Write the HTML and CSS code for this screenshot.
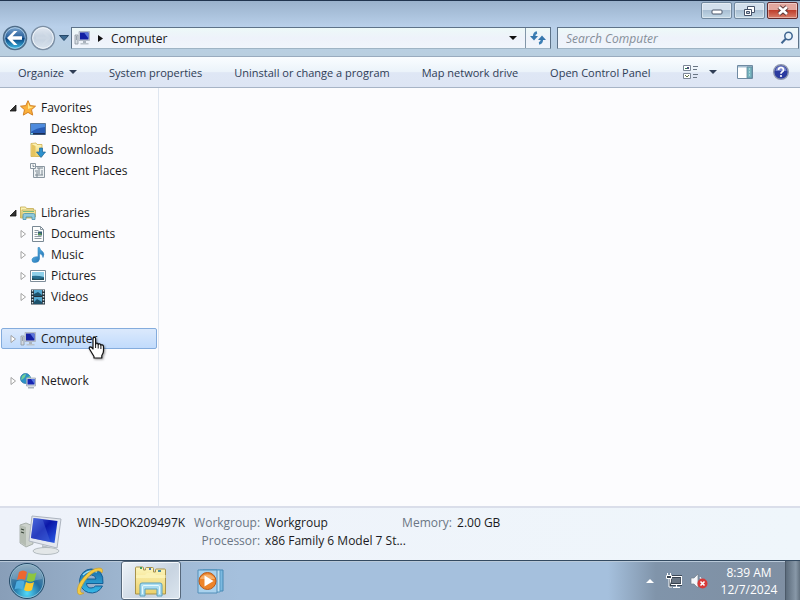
FILE: index.html
```html
<!DOCTYPE html>
<html lang="en">
<head>
    <meta charset="UTF-8">
    <meta name="viewport" content="width=device-width, initial-scale=1.0">
    <title>Computer</title>
    <link rel="stylesheet" href="styles.css">
</head>
<body>
    <!-- Shared icons -->
    <svg class="sprite" aria-hidden="true">
        <defs>
            <linearGradient id="screenBlue" x1="0" y1="0" x2="1" y2="1">
                <stop offset="0" stop-color="#4d6ae0"/>
                <stop offset=".45" stop-color="#0a16a8"/>
                <stop offset="1" stop-color="#2f62e8"/>
            </linearGradient>
            <linearGradient id="folderYellow" x1="0" y1="0" x2="0" y2="1">
                <stop offset="0" stop-color="#fdf6bd"/>
                <stop offset="1" stop-color="#ecd06a"/>
            </linearGradient>
            <linearGradient id="musicBlue" x1="0" y1="0" x2="1" y2="1">
                <stop offset="0" stop-color="#6fc8ee"/>
                <stop offset="1" stop-color="#1263ae"/>
            </linearGradient>
        </defs>
        <symbol id="icon-pc" viewBox="0 0 16 16">
            <path d="M1 5h3v9H1z" fill="#d4dbe2" stroke="#8b959f" stroke-width=".8"/>
            <path d="M2 7h1M2 9h1" stroke="#5d6c7a"/>
            <path d="M5 1.500h10.500v9H5z" fill="#c7ced8" stroke="#a8b1bd" stroke-width=".8"/>
            <path d="M6 2.500h8.500v7H6z" fill="#1420a4"/>
            <path d="M10 2.500h4.500v6z" fill="#5a75dc"/>
            <path d="M9 11h3v2H9z" fill="#aab3bd"/>
            <path d="M6.500 13h8v1.500h-8z" fill="#bac3cb"/>
        </symbol>
        <symbol id="arrow-open" viewBox="0 0 8 8">
            <path d="M7 1v6H1z" fill="#333" stroke="#111" stroke-width=".8"/>
        </symbol>
        <symbol id="arrow-closed" viewBox="0 0 8 8">
            <path d="M2 .5v7L6.500 4z" fill="#fff" stroke="#9a9a9a" stroke-width=".9"/>
        </symbol>
        <symbol id="arrow-down" viewBox="0 0 8 4">
            <path d="M0 0h8L4 4z" fill="currentColor"/>
        </symbol>
    </svg>

    <div class="window">
        <header class="titlebar">
            <button class="win-btn" aria-label="Minimize">
                <svg width="14" height="10" viewBox="0 0 14 10"><rect x="2" y="4" width="10" height="4" rx="1" fill="#fff" stroke="#4a566b"/></svg>
            </button>
            <button class="win-btn" aria-label="Restore">
                <svg width="14" height="12" viewBox="0 0 14 12"><path d="M4.500 1.500h7v6h-7z" fill="#fff" stroke="#46536a"/><path d="M1.500 4.500h7v6h-7z" fill="#fff" stroke="#46536a"/><path d="M3.500 6.500h3v2h-3z" fill="#b7c7d8" stroke="#46536a"/></svg>
            </button>
            <button class="win-btn win-close" aria-label="Close">
                <svg width="14" height="11" viewBox="0 0 14 11"><path d="M3 2l8 7M11 2L3 9" stroke="#5d3a3a" stroke-width="4.500"/><path d="M3 2l8 7M11 2L3 9" stroke="#fff" stroke-width="2.600"/></svg>
            </button>
        </header>

        <div class="navbar">
            <div class="travel">
                <button class="travel-btn" aria-label="Back">
                    <svg width="26" height="26" viewBox="0 0 26 26">
                        <defs><linearGradient id="backFill" x1="0" y1="0" x2="0" y2="1"><stop offset="0" stop-color="#7fa9d2"/><stop offset=".48" stop-color="#285f9b"/><stop offset=".52" stop-color="#07427f"/><stop offset="1" stop-color="#42c4ee"/></linearGradient></defs>
                        <circle cx="13" cy="13" r="11.500" fill="url(#backFill)" stroke="#4f6c88" stroke-width="1.500"/>
                        <circle cx="13" cy="13" r="10.300" fill="none" stroke="#c5e0f3" stroke-opacity=".7"/>
                        <path d="M5 13l7-7h3.500l-5 5.200H20v3.600h-9.500l5 5.200H12z" fill="#fff"/>
                    </svg>
                </button>
                <button class="travel-btn" aria-label="Forward">
                    <svg width="26" height="26" viewBox="0 0 26 26">
                        <defs><linearGradient id="fwdFill" x1="0" y1="0" x2="0" y2="1"><stop offset="0" stop-color="#e4eaf2"/><stop offset=".5" stop-color="#c3d0df"/><stop offset="1" stop-color="#dbe5ef"/></linearGradient></defs>
                        <circle cx="13" cy="13" r="11.500" fill="url(#fwdFill)" stroke="#7c8fa4" stroke-width="1.500"/>
                        <circle cx="13" cy="13" r="10.300" fill="none" stroke="#f0f5fa"/>
                        <path d="M21 13l-7-7h-3l5 5.500H6v3h10L11 20h3z" fill="#d3dde8" opacity=".5"/>
                    </svg>
                </button>
                <button class="recent-btn" aria-label="Recent pages">
                    <svg width="10" height="6" viewBox="0 0 10 6"><path d="M.5.500h9L5 5.500z" fill="#3d6a92" stroke="#27496a"/></svg>
                </button>
            </div>
            <div class="address">
                <svg width="16" height="16"><use href="#icon-pc"/></svg>
                <svg width="5" height="7" viewBox="0 0 5 7"><path d="M0 0l5 3.500L0 7z" fill="#111"/></svg>
                <a class="crumb" href="#">Computer</a>
                <button class="address-drop" aria-label="Previous locations">
                    <svg width="8" height="4"><use href="#arrow-down"/></svg>
                </button>
                <button class="refresh" aria-label="Refresh">
                    <svg width="16" height="16" viewBox="0 0 16 16"><path d="M7 2.500Q4 3 4 7" fill="none" stroke="#3d7fb5" stroke-width="2.400"/><path d="M0 6h8L4 10.500z" fill="#3576ad"/><path d="M9 13.500q3-.5 3-4.500" fill="none" stroke="#3d7fb5" stroke-width="2.400"/><path d="M8 10h8L12 5.500z" fill="#3576ad"/></svg>
                </button>
            </div>
            <div class="search">
                <input type="text" placeholder="Search Computer" aria-label="Search Computer">
                <svg width="14" height="14" viewBox="0 0 14 14"><circle cx="8.500" cy="5" r="3.700" fill="#eaf4fb" stroke="#3f6590" stroke-width="1.500"/><path d="M5.800 7.800L1.500 12.300" stroke="#3f6590" stroke-width="2"/></svg>
            </div>
        </div>

        <div class="toolbar">
            <button class="tool">Organize <svg width="8" height="4"><use href="#arrow-down"/></svg></button>
            <button class="tool">System properties</button>
            <button class="tool">Uninstall or change a program</button>
            <button class="tool">Map network drive</button>
            <button class="tool">Open Control Panel</button>
            <div class="tool-icons">
                <button class="tool view-btn" aria-label="Change your view">
                    <svg width="16" height="16" viewBox="0 0 16 16"><path d="M.5 1.500h7v5h-7zM.5 9.500h7v5h-7z" fill="#fff" stroke="#7b8796"/><path d="M2 4h2v1H2z" fill="#2c7a4a"/><path d="M4 3h2v2H4z" fill="#444d78"/><path d="M2 11l2 2 2-2" fill="none" stroke="#5c7040"/><path d="M10 2.500h5M10 5.500h4M10 10.500h5M10 13.500h4" stroke="#6a7684"/></svg>
                    <svg width="8" height="4"><use href="#arrow-down"/></svg>
                </button>
                <button class="tool" aria-label="Show the preview pane">
                    <svg width="16" height="14" viewBox="0 0 16 14"><path d="M.5.500h15v13H.5z" fill="#fff" stroke="#6f8aa2"/><path d="M1 1h14v1.500H1z" fill="#a7c0d2"/><path d="M10 2h5v11h-5z" fill="#77b5bf" stroke="#5f899c" stroke-width=".8"/><path d="M12 4h1M12 7h1M12 10h1" stroke="#d8f3f3"/></svg>
                </button>
                <button class="tool" aria-label="Get help">
                    <svg width="16" height="16" viewBox="0 0 16 16"><circle cx="8" cy="8" r="7.300" fill="#2b3ba0" stroke="#8d96ae" stroke-width="1.400"/><path d="M2.500 7a5.500 5 0 0 1 11 0z" fill="#7785cd"/><path d="M5.500 6q0-2.500 2.500-2.500T10.500 6Q10.500 7.300 9 8.100 8 8.700 8 9.800" fill="none" stroke="#fff" stroke-width="1.700"/><circle cx="8" cy="12" r="1.100" fill="#fff"/></svg>
                </button>
            </div>
        </div>

        <div class="content">
            <nav class="sidebar">
                <ul class="tree">
                    <li class="node">
                        <button class="twisty" aria-label="Collapse Favorites"><svg width="8" height="8"><use href="#arrow-open"/></svg></button>
                        <a href="#"><svg width="16" height="16" viewBox="0 0 16 16"><path d="M8 .7l2.200 4.900 5.300.6-4 3.500 1.200 5.400L8 12.400l-4.700 2.700 1.200-5.400-4-3.500 5.300-.6z" fill="#fbb03b" stroke="#d38226"/><path d="M8 2.500l1.600 3.900 4 .5L8 9z" fill="#ffe98a"/></svg>Favorites</a>
                    </li>
                    <li class="node child">
                        <a href="#"><svg width="16" height="16" viewBox="0 0 16 16"><path d="M.5 2.500h15v11H.5z" fill="#285cb5" stroke="#5a7898"/><path d="M1 3h14v3Q6 7 1 11z" fill="#4e8bdd"/><path d="M1 12h14v1.500H1z" fill="#1b2f58"/><path d="M1 12h2v1.500H1z" fill="#7ed1e8"/></svg>Desktop</a>
                    </li>
                    <li class="node child">
                        <a href="#"><svg width="16" height="16" viewBox="0 0 16 16"><path d="M1 1.500l5-.5 1 1.500h5v12H1z" fill="url(#folderYellow)" stroke="#d1ae4e" stroke-width=".8"/><path d="M1.500 2l4 2v11l-4-1z" fill="#e6c45f"/><path d="M9.500 6h3v4h3L11 15.500 6.500 10h3z" fill="#2e91cd" stroke="#1d6699" stroke-width=".7"/></svg>Downloads</a>
                    </li>
                    <li class="node child">
                        <a href="#"><svg width="16" height="16" viewBox="0 0 16 16"><path d="M3.500 3.500h11v11h-11z" fill="#edf1f3" stroke="#8a96a0"/><path d="M.5.500h5v5h-5z" fill="#f8fafb" stroke="#8a96a0"/><path d="M3 1.500v2h1.500M7 5h6M9 5v6M12 7v5M5 8h3M5 12h8M7 9v5" fill="none" stroke="#7b8791"/></svg>Recent Places</a>
                    </li>
                </ul>

                <ul class="tree">
                    <li class="node">
                        <button class="twisty" aria-label="Collapse Libraries"><svg width="8" height="8"><use href="#arrow-open"/></svg></button>
                        <a href="#"><svg width="16" height="16" viewBox="0 0 16 16"><path d="M.5 2h5l1 1.500h7V13H.5z" fill="url(#folderYellow)" stroke="#c3a84b" stroke-width=".8"/><path d="M2 5h13.500v7H2z" fill="#f5e294" stroke="#b8a75b" stroke-width=".7"/><path d="M3 14.500V10q0-1.500 1.500-1.500h9Q15 8.500 15 10v4.500h-3V12H6v2.500z" fill="#8fc9dc" stroke="#4b92ac" stroke-width=".8"/><path d="M3 6.500h11" stroke="#7cb87a"/></svg>Libraries</a>
                    </li>
                    <li class="node child">
                        <button class="twisty" aria-label="Expand Documents"><svg width="8" height="8"><use href="#arrow-closed"/></svg></button>
                        <a href="#"><svg width="16" height="16" viewBox="0 0 16 16"><path d="M2.500.500h8l3 3v12h-11z" fill="#fcfdfd" stroke="#798894"/><path d="M10.500.500v3h3M4.500 4.500h4M4.500 6.500h3M4.500 8.500h3M4.500 10.500h7M4.500 12.500h7" fill="none" stroke="#8e9aa3"/><path d="M8 5.500h4v4H8z" fill="#355c74"/><path d="M8 8l2-1 2 2H8z" fill="#5b9c4b"/></svg>Documents</a>
                    </li>
                    <li class="node child">
                        <button class="twisty" aria-label="Expand Music"><svg width="8" height="8"><use href="#arrow-closed"/></svg></button>
                        <a href="#"><svg width="16" height="16" viewBox="0 0 16 16"><path d="M8 .5h1.500q.5 2.500 3 4 2.500 2 .5 6 0-3-3.500-4V12q-.5 3.500-4.500 3.500-3.500 0-3-3 .8-3 6-2.700z" fill="url(#musicBlue)" stroke="#3283bd" stroke-width=".6"/></svg>Music</a>
                    </li>
                    <li class="node child">
                        <button class="twisty" aria-label="Expand Pictures"><svg width="8" height="8"><use href="#arrow-closed"/></svg></button>
                        <a href="#"><svg width="16" height="16" viewBox="0 0 16 16"><path d="M.5 2.500h15v11H.5z" fill="#fff" stroke="#7e8d9a"/><path d="M2 4h12v8H2z" fill="#8fd0ea"/><path d="M2 8q5-1 12 1v3H2z" fill="#276f91"/><path d="M2 10q5 2 12 0v2H2z" fill="#214e5d"/></svg>Pictures</a>
                    </li>
                    <li class="node child">
                        <button class="twisty" aria-label="Expand Videos"><svg width="8" height="8"><use href="#arrow-closed"/></svg></button>
                        <a href="#"><svg width="16" height="16" viewBox="0 0 16 16"><path d="M1 .5h14v15H1z" fill="#24323c"/><path d="M4 1h8v6H4zM4 8h8v7H4z" fill="#55a9d2"/><path d="M4 5l4-2 4 3v1H4zM4 13l3-3 5 3v2H4z" fill="#1d526c"/><path d="M2.500 1v14M13.500 1v14" stroke="#d7e4ea" stroke-width="1.500" stroke-dasharray="1.500 1.500"/></svg>Videos</a>
                    </li>
                </ul>

                <ul class="tree">
                    <li class="node selected">
                        <button class="twisty" aria-label="Expand Computer"><svg width="8" height="8"><use href="#arrow-closed"/></svg></button>
                        <a href="#"><svg width="16" height="16"><use href="#icon-pc"/></svg>Computer</a>
                        <!-- Hand pointer -->
                        <svg class="pointer" width="20" height="24" viewBox="0 0 20 24"><path d="M6 20.500L1.500 13q-.8-2 .8-2.200 1.200 0 2.700 2.200V3q0-1.700 1.300-1.700T7.600 3v5.500q0-1.300 1.300-1.300t1.300 1.500q.2-1 1.400-.8 1.300.2 1.300 1.500.2-.8 1.400-.5 1.200.3 1.200 1.800V15q0 2-1.700 4.500V22H6z" fill="#fff" stroke="#111" stroke-width="1.200" stroke-linejoin="round"/><path d="M7.600 8v4M10.200 8.500v4M12.900 9.500v3.500" stroke="#111"/></svg>
                    </li>
                </ul>

                <ul class="tree">
                    <li class="node">
                        <button class="twisty" aria-label="Expand Network"><svg width="8" height="8"><use href="#arrow-closed"/></svg></button>
                        <a href="#"><svg width="16" height="16" viewBox="0 0 16 16"><circle cx="5.500" cy="5.500" r="5" fill="#2d92c7" stroke="#22709f" stroke-width=".7"/><path d="M2 3q2-2 4-2l-1 3-2 2-2 1zM6 5l4-2v3L7 9z" fill="#70ce96"/><path d="M6.500 5h9v8h-9z" fill="#d3dbe5" stroke="#929dac" stroke-width=".7"/><path d="M7.500 6h7v5.500h-7z" fill="#1625b2"/><path d="M11 6h3.500v5z" fill="#5577e3"/><path d="M8 14h6v1.500H8z" fill="#a9b4bd"/></svg>Network</a>
                    </li>
                </ul>
            </nav>
            <main class="files"></main>
        </div>

        <footer class="details">
            <svg width="46" height="42" viewBox="0 0 46 42">
                <path d="M2 11l6-2 7 3v18l-7 3-6-4z" fill="#cdd3cd" stroke="#9ca49e" stroke-width=".8"/>
                <path d="M2 11l6 2v19l-6-4z" fill="#b5bdb3"/>
                <path d="M3 15l3 1M3 18l3 1" stroke="#384538" stroke-width="1.300"/>
                <path d="M14 2l29 3-4 29-28-7z" fill="#e4e8ef" stroke="#adb4bf"/>
                <path d="M15.500 4l24 3-3 22-23.500-5z" fill="url(#screenBlue)"/>
                <path d="M15.500 4l9 1 8 23-19.500-4z" fill="#4663d5" opacity=".5"/>
                <path d="M24 31l8 2-1 4h-7z" fill="#b9c0c6"/>
                <ellipse cx="28" cy="37" rx="13" ry="3.500" fill="#e3e7e8" stroke="#a7b0b5" stroke-width=".8"/>
            </svg>
            <strong class="pc-name">WIN-5DOK209497K</strong>
            <dl class="facts">
                <dt>Workgroup:</dt><dd>Workgroup</dd>
                <dt>Memory:</dt><dd>2.00 GB</dd>
                <dt>Processor:</dt><dd class="wide">x86 Family 6 Model 7 St...</dd>
            </dl>
        </footer>
    </div>

    <div class="taskbar">
        <button class="start" aria-label="Start">
            <svg width="38" height="38" viewBox="0 0 38 38">
                <defs><radialGradient id="orb" cx=".5" cy=".85" r=".8"><stop offset="0" stop-color="#51dafa"/><stop offset=".5" stop-color="#226da0"/><stop offset="1" stop-color="#6f94ad"/></radialGradient></defs>
                <circle cx="19" cy="19" r="17.500" fill="url(#orb)" stroke="#254b68"/>
                <circle cx="19" cy="19" r="16.500" fill="none" stroke="#a4cadd" stroke-opacity=".7"/>
                <path d="M4 17a15 14 0 0 1 30 0q-15 4-30 0z" fill="#fff" opacity=".22"/>
                <path d="M11 10q4-3 8 0l-2 8q-4-2-8 0z" fill="#ed6730"/>
                <path d="M20.500 10.500q4 2.500 8 0l-2 8q-4 2.500-8 0z" fill="#8dc63f"/>
                <path d="M8.500 19.500q4-2 8 0l-2 8q-4-2-8 0z" fill="#4dacdf"/>
                <path d="M18 20q4 2.500 8 0l-2 8q-4 2.500-8 0z" fill="#fcc92d"/>
            </svg>
        </button>
        <button class="task" aria-label="Internet Explorer">
            <svg width="32" height="32" viewBox="0 0 32 32">
                <defs><linearGradient id="ieBlue" x1="0" y1="0" x2="0" y2="1"><stop offset="0" stop-color="#1c6da8"/><stop offset="1" stop-color="#35b9e8"/></linearGradient></defs>
                <path d="M16 4a12 12 0 1 0 11.500 17h-7q-1.500 2-4.500 2-4 0-4.500-4.500H28Q29 4 16 4zm-4.500 10q1-4 5-4 4 0 4.500 4z" fill="url(#ieBlue)" fill-rule="evenodd" stroke="#145f96"/>
                <path d="M8 10q6-6 14-3" fill="none" stroke="#9be0f6" stroke-width="1.500"/>
                <path d="M27 8q2-5-3-5Q17 3 9 12 1 21 2.500 27.500q1 4 6.500.5-5 .5-3-5Q9 15 17 8.500q7-5 10-.5z" fill="#f5ca43" stroke="#c69a23" stroke-width=".6"/>
            </svg>
        </button>
        <button class="task active" aria-label="Windows Explorer">
            <svg width="34" height="32" viewBox="0 0 34 32">
                <path d="M1.500 29V3q0-1 1-1h6q1 0 1 1v2h2V3.500q0-1 1-1h6q1 0 1 1V7h2V5q0-1 1-1h8q1 0 1 1v24z" fill="url(#folderYellow)" stroke="#a8924a"/>
                <path d="M2 10h9l2-2h7l2 2h9.500v3H2z" fill="#fbf2b5"/>
                <path d="M6 2h2v2H6z" fill="#3f9c61"/>
                <path d="M15 3h2v2h-2z" fill="#4a76b8"/>
                <path d="M24 5h3v2h-3z" fill="#4a8c9c"/>
                <path d="M6 31V20q0-2 2-2h18q2 0 2 2v11h-5v-7H11v7z" fill="#a9dcf0" stroke="#5a9fbd"/>
                <path d="M8.500 29v-7q0-1.500 1.500-1.500h14q1.500 0 1.500 1.500v7" fill="none" stroke="#e6f8fd"/>
            </svg>
        </button>
        <button class="task" aria-label="Windows Media Player">
            <svg width="28" height="28" viewBox="0 0 28 28">
                <path d="M6 3h20v21H6z" fill="#7bb9e0" stroke="#4688b4"/>
                <path d="M3 3h20v22H3z" fill="#c6e3f4" stroke="#579ac4"/>
                <path d="M1 3h19v23H1z" fill="#a9d2ee" stroke="#538fb9"/>
                <circle cx="10.500" cy="14" r="8.500" fill="#ed842a" stroke="#b95a1b"/>
                <path d="M3 12a8 7 0 0 1 15 0z" fill="#f5ae6a"/>
                <path d="M7.500 8.500v11l9-5.500z" fill="#fff"/>
            </svg>
        </button>
        <div class="tray">
            <button class="tray-btn more" aria-label="Show hidden icons"><svg width="8" height="4" viewBox="0 0 8 4"><path d="M0 4h8L4 0z" fill="#fff"/></svg></button>
            <button class="tray-btn" aria-label="Network"><svg width="16" height="16" viewBox="0 0 16 16"><path d="M4.500 3.500h11v8h-11z" fill="#697583" stroke="#26313e" stroke-width="2.500"/><path d="M4.500 3.500h11v8h-11zM7 14.500h7M10.500 12v2" fill="none" stroke="#fff" stroke-width="1.200"/><path d="M.5 2.500h5v3h-5zM1.500 0v2M4.500 0v2M3 6v8h3" fill="#34404d" stroke="#fff"/></svg></button>
            <button class="tray-btn" aria-label="Volume muted"><svg width="18" height="16" viewBox="0 0 18 16"><path d="M1 5h3l4-4v14l-4-4H1z" fill="#f5f7fa" stroke="#747e89" stroke-width=".7"/><path d="M10 4q2 2 1 5" fill="none" stroke="#fff"/><circle cx="12.500" cy="10.500" r="5" fill="#d83a38"/><path d="M10.500 8.500l4 4M14.500 8.500l-4 4" stroke="#fff" stroke-width="1.600"/></svg></button>
            <button class="clock"><time>8:39 AM</time><time>12/7/2024</time></button>
            <button class="show-desktop" aria-label="Show desktop"></button>
        </div>
    </div>
</body>
</html>
```

FILE: styles.css
```css
* {
    box-sizing: border-box;
}

body {
    margin: 0;
    height: 100vh;
    display: flex;
    flex-direction: column;
    font-family: "Open Sans", "Noto Sans", sans-serif;
    font-size: 12px;
    color: var(--text-color);
    overflow: hidden;
}

:root {
    --text-color: #1b1b22;
    --muted-color: #6b7684;
    --tool-color: #2f3d55;
    --frame-line: #5d7288;
}

button {
    padding: 0;
    border: none;
    background: none;
    font: inherit;
    color: inherit;
}

a {
    color: inherit;
    text-decoration: none;
}

svg {
    flex: none;
    display: block;
}

.sprite {
    position: absolute;
    width: 0;
    height: 0;
}

.window {
    flex: 1;
    min-height: 0;
    display: flex;
    flex-direction: column;
    border-top: 1px solid #20344e;
    background: linear-gradient(#9ab2cc, #b9d0ea 26px, #b9cfdf 56px);
}

/* Title bar */
.titlebar {
    display: flex;
    justify-content: flex-end;
    gap: 2px;
    height: 26px;
    padding: 1px 2px 0 0;
}

.win-btn {
    display: flex;
    align-items: center;
    justify-content: center;
    width: 31px;
    height: 17px;
    border: 1px solid #71889e;
    border-radius: 2px;
    background: linear-gradient(#d3e0ed 50%, #a9bfd3 50%, #c3d8e6);
    box-shadow: inset 0 0 0 1px rgba(255, 255, 255, 0.4);
}

.win-close {
    border-color: #612a2c;
    background: linear-gradient(#e3a79e 45%, #bf3f2d 50%, #d9806c);
}

/* Address bar */
.navbar {
    display: flex;
    align-items: center;
    height: 29px;
    padding: 0 1px 7px 0;
}

.travel {
    display: flex;
    align-items: center;
    gap: 2px;
    width: 71px;
    padding-left: 2px;
}

.recent-btn {
    margin-left: 1px;
}

.address, .search {
    display: flex;
    align-items: center;
    height: 22px;
    border: 1px solid var(--frame-line);
    border-bottom-color: #9fb4c5;
    background: linear-gradient(#edf9f8, #eef2fa 50%, #f0f5fc);
}

.address {
    flex: 1;
    gap: 8px;
    padding-left: 2px;
    margin-right: 6px;
}

.crumb {
    flex: 1;
}

.address-drop {
    color: #111;
}

.refresh {
    display: flex;
    align-items: center;
    justify-content: center;
    align-self: stretch;
    width: 25px;
    border-left: 1px solid #8296a9;
}

.search {
    width: 242px;
    padding: 0 4px 0 8px;
}

.search input {
    flex: 1;
    min-width: 0;
    padding: 0;
    border: none;
    outline: none;
    background: none;
    font: inherit;
    font-style: italic;
}

.search input::placeholder {
    color: #858e98;
    opacity: 1;
}

/* Command bar */
.toolbar {
    display: flex;
    align-items: center;
    gap: 32px;
    height: 32px;
    padding: 0 15px 0 18px;
    border-top: 1px solid #99abbe;
    border-bottom: 1px solid #a7b4c6;
    background: linear-gradient(#fafdff, #ebf3fa 50%, #dfe7f5 52%, #dde5f4);
    color: var(--tool-color);
    font-size: 11px;
}

.tool {
    display: flex;
    align-items: center;
    gap: 5px;
    white-space: nowrap;
}

.tool-icons {
    display: flex;
    align-items: center;
    gap: 20px;
    margin-left: auto;
}

.view-btn {
    gap: 10px;
}

/* Folder tree and file area */
.content {
    flex: 1;
    display: flex;
    min-height: 0;
    background: #fcfcfe;
}

.sidebar {
    display: flex;
    flex-direction: column;
    gap: 21px;
    width: 159px;
    padding: 9px 1px;
    border-right: 1px solid #dfe6f0;
}

.files {
    flex: 1;
}

.tree {
    margin: 0;
    padding: 0;
    list-style: none;
}

.node {
    display: flex;
    align-items: center;
    height: 21px;
    padding-left: 8px;
}

.node a {
    display: flex;
    align-items: center;
    gap: 5px;
    flex: 1;
}

.twisty {
    width: 11px;
}

.child {
    padding-left: 18px;
}

.child a:first-child {
    margin-left: 11px;
}

.selected {
    position: relative;
    padding-left: 7px;
    border: 1px solid #84acdd;
    border-radius: 2px;
    background: linear-gradient(#dbe9fc, #c1dbfc);
}

.pointer {
    position: absolute;
    left: 86px;
    top: 7px;
    filter: drop-shadow(1px 1px 1px rgba(0, 0, 0, 0.4));
}

/* Details pane */
.details {
    display: flex;
    align-items: flex-start;
    height: 54px;
    padding: 6px 0 0 18px;
    border-top: 2px solid #dadeea;
    background: linear-gradient(90deg, #eef2fa, #eff6fb);
}

.pc-name {
    margin: 0 9px 0 13px;
    font-weight: normal;
    line-height: 18px;
}

.facts {
    display: grid;
    grid-template-columns: auto 132px auto 1fr;
    column-gap: 5px;
    margin: 0;
    line-height: 18px;
}

.facts dt {
    color: var(--muted-color);
    text-align: right;
}

.facts dd {
    margin: 0;
    white-space: nowrap;
}

.facts .wide {
    grid-column: span 3;
}

/* Taskbar */
.taskbar {
    display: flex;
    height: 40px;
    border-top: 1px solid #334a61;
    background: linear-gradient(90deg, #889eb8, #9db5cf 15%, #a5c0dd 30%, #a5c0dd 76%, #8094aa 82%, #7f8fa2);
    box-shadow: inset 0 1px 0 #b9c9d9;
}

.start {
    padding: 0 15px 0 8px;
}

.task {
    display: flex;
    align-items: center;
    justify-content: center;
    width: 60px;
    border: 1px solid transparent;
    border-radius: 3px;
}

.active {
    border-color: #56687b;
    background: linear-gradient(135deg, #eef3f8, #c8d4e1 60%, #dbe5ee);
    box-shadow: inset 0 0 0 1px #f4f8fc;
}

.tray {
    display: flex;
    align-items: center;
    gap: 8px;
    margin-left: auto;
    color: #fff;
}

.more {
    padding-right: 4px;
}

.clock {
    display: grid;
    width: 66px;
    line-height: 17px;
    text-align: center;
}

.show-desktop {
    align-self: stretch;
    width: 15px;
    margin-left: -5px;
    border-left: 1px solid #4c5a69;
    background: linear-gradient(90deg, #5b6b7b, #8898a8 70%, #62717f);
}
```
